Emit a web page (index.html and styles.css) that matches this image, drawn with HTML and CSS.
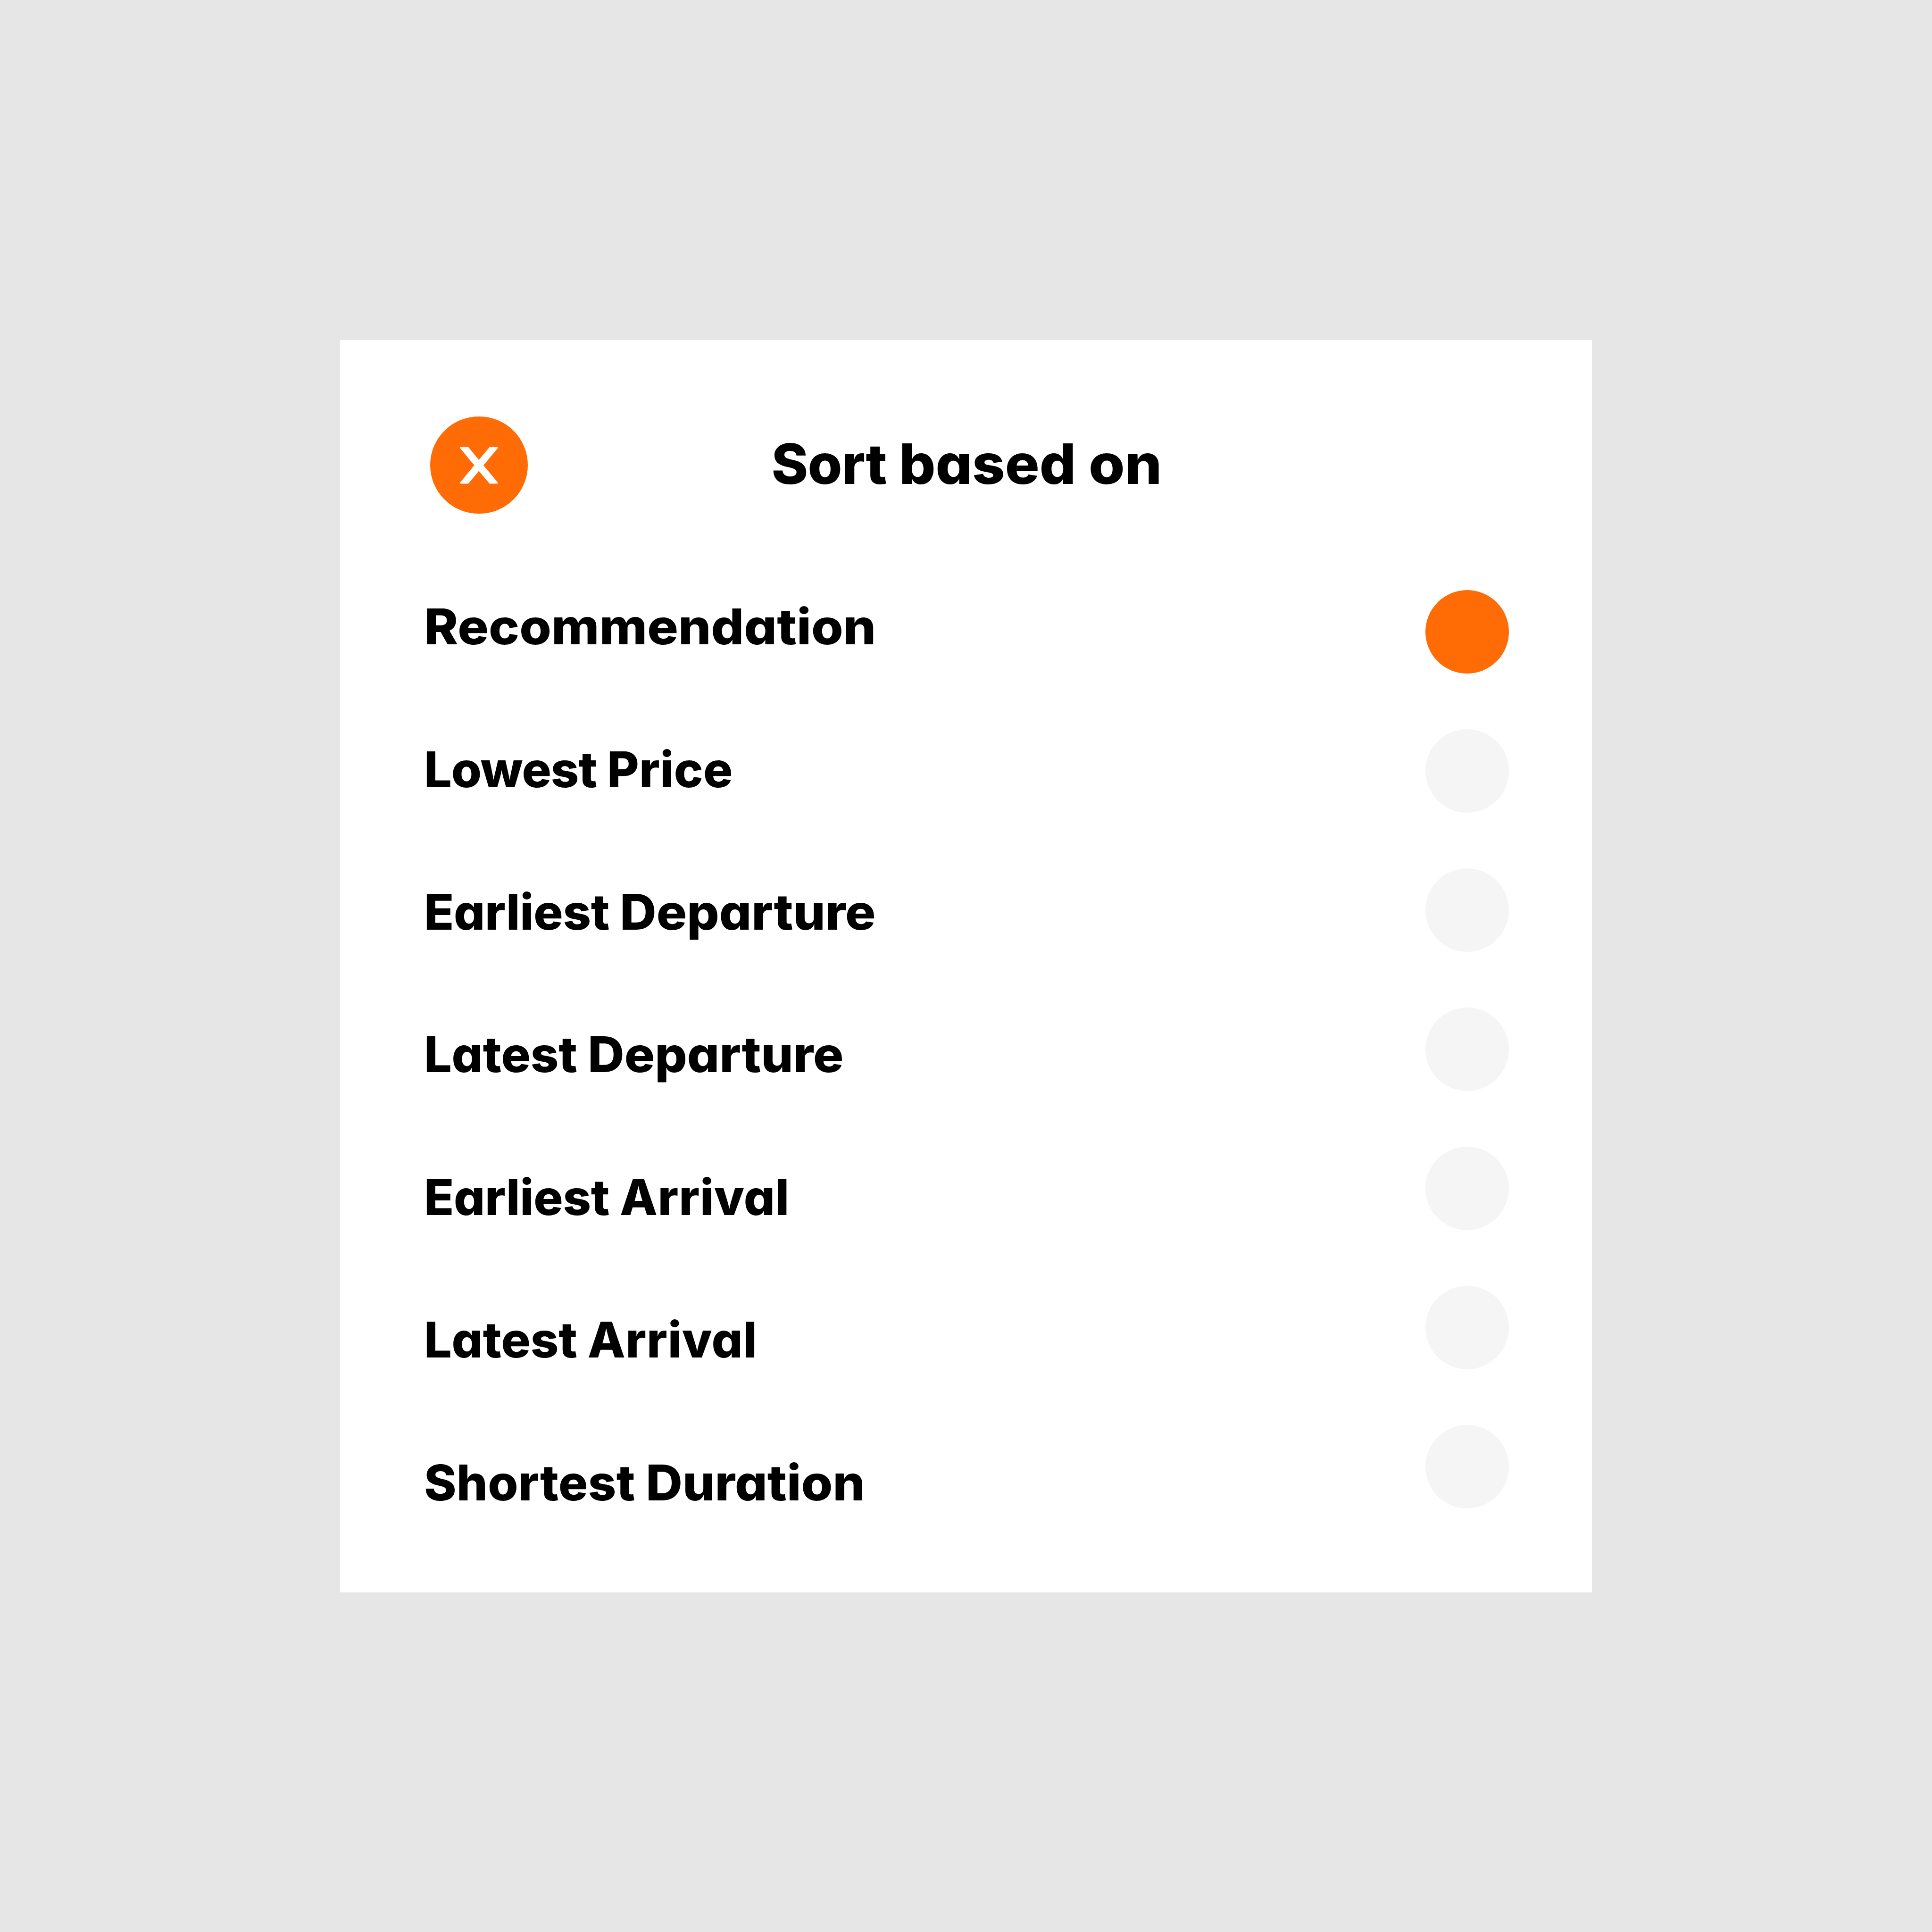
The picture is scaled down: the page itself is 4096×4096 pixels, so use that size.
FILE: index.html
```html
<!DOCTYPE html>
<html lang="en">
<head>
<meta charset="utf-8">
<title>Sort based on</title>
<link rel="stylesheet" href="styles.css">
</head>
<body>
<main class="card">
  <header class="header">
    <button class="close" aria-label="Close">
      <svg class="close-icon" viewBox="0 0 654 654">
        <path d="M204 205H256L327 291L399 205H450Q457 207 453 214L358 328L453 442Q457 449 450 451H399L327 366L256 451H204Q198 449 202 442L296 328L202 214Q198 207 204 205Z"/>
      </svg>
    </button>
    <h1 class="title"><span class="t-sort">Sort</span> <span class="t-based">based</span> <span class="t-on">on</span></h1>
  </header>
  <div class="options">
    <ul class="labels">
      <li class="label"><span class="recommendation">Recommendation</span></li>
      <li class="label"><span class="lowest">Lowest</span> <span class="price">Price</span></li>
      <li class="label"><span class="earliest">Earliest</span> <span class="departure">Departure</span></li>
      <li class="label"><span class="latest">Latest</span> <span class="departure">Departure</span></li>
      <li class="label"><span class="earliest">Earliest</span> <span class="arrival">Arrival</span></li>
      <li class="label"><span class="latest">Latest</span> <span class="arrival">Arrival</span></li>
      <li class="label"><span class="shortest">Shortest</span> <span class="duration">Duration</span></li>
    </ul>
    <div class="radios">
      <span class="radio selected"></span>
      <span class="radio"></span>
      <span class="radio"></span>
      <span class="radio"></span>
      <span class="radio"></span>
      <span class="radio"></span>
      <span class="radio"></span>
    </div>
  </div>
</main>
</body>
</html>
```
FILE: styles.css
```css
* { box-sizing: border-box; }

body {
  margin: 0;
  padding: 720.6px;
  height: 4096px;
  background: #e6e6e6;
  color: #000;
  font-family: Inter, "Open Sans", sans-serif;
  font-weight: 800;
  font-feature-settings: "cv11", "ss08";
}

.card {
  height: 2655px;
  padding: 162.1px 176.8px 0;
  background: #fff;
}

.header {
  display: grid;
  grid-template-columns: 206.5px 1fr 206.5px;
  align-items: center;
  padding: 0 14.7px;
}

.close {
  display: block;
  width: 206.5px;
  height: 206.5px;
  padding: 0;
  border: 0;
  border-radius: 50%;
  background: #ff6c05;
}

.close-icon { display: block; width: 100%; height: 100%; fill: #fff; }

.title {
  margin: 0;
  padding: 0 0 5px 3px;
  font-size: 118px;
  font-weight: 800;
  line-height: 140px;
  text-align: center;
  white-space: nowrap;
  word-spacing: 1px;
}

.options { display: flex; justify-content: space-between; }

.labels {
  margin: 87.9px 0 0;
  padding: 0 0 0 1.5px;
  list-style: none;
}

.label {
  height: 302.45px;
  font-size: 104px;
  line-height: 302.45px;
  white-space: nowrap;
  word-spacing: -1px;
}

.radios {
  display: flex;
  flex-direction: column;
  gap: 118px;
  margin-top: 162.3px;
}

.radio {
  width: 177px;
  height: 177px;
  border-radius: 50%;
  background: #f5f5f5;
}

.selected { background: #ff6c05; }

/* Optical width and tracking per word */
.t-based, .t-on, .recommendation, .departure, .duration {
  display: inline-block;
  transform-origin: left center;
}
.t-sort { letter-spacing: -1px; }
.t-based { margin-right: 11px; transform: scaleX(1.03); }
.t-on { margin-right: 7px; transform: scaleX(1.05); }
.recommendation { transform: scaleX(1.053); }
.lowest { letter-spacing: -1px; }
.price { letter-spacing: 0.2px; }
.earliest { letter-spacing: -0.3px; }
.departure { transform: scaleX(1.033); }
.latest { letter-spacing: -0.1px; }
.arrival { letter-spacing: 0.6px; }
.shortest { letter-spacing: 0.3px; }
.duration { transform: scaleX(1.038); }
```
